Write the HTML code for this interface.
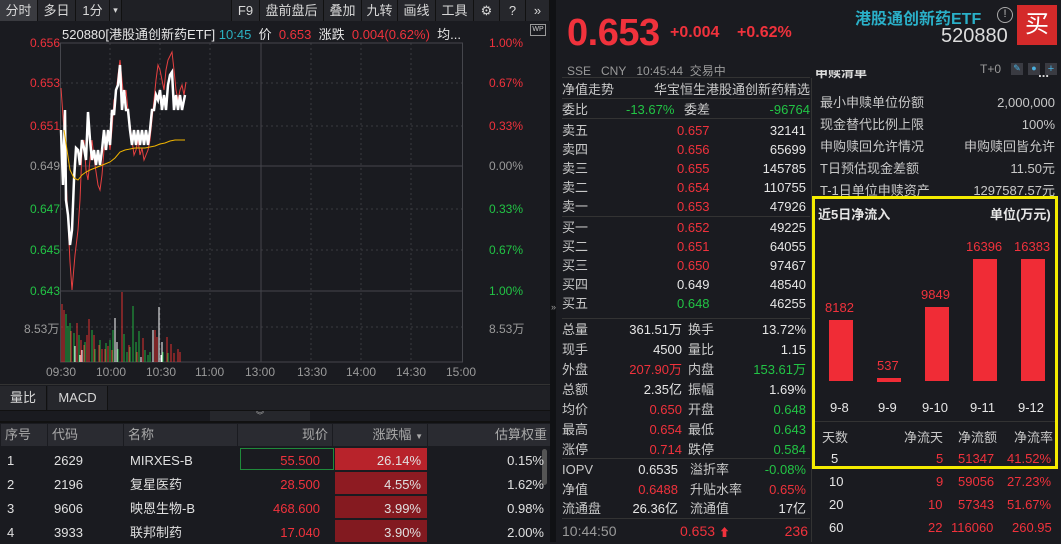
<!DOCTYPE html>
<html><head><meta charset="utf-8"><style>
*{margin:0;padding:0;box-sizing:border-box}
body{width:1061px;height:542px;background:#1a1b20;font-family:"Liberation Sans","Noto Sans CJK SC",sans-serif;color:#c8c8c8;overflow:hidden;position:relative;font-size:13px}
.a{position:absolute;white-space:nowrap}
.tb{position:absolute;top:0;height:21px;background:#26272c;border-right:1px solid #111;color:#d8d8d8;font-size:13px;line-height:21px;text-align:center}
.row{position:absolute;left:562px;width:248px;height:19px;font-size:13px;line-height:19px}
.row span{position:absolute}
.sr{position:absolute;left:815px;width:240px;height:22px;font-size:13px;line-height:22px;color:#c8c8c8}
.th{position:absolute;top:424px;height:22px;background:#2a2b31;color:#aaa;line-height:22px;font-size:13px}
.td{position:absolute;height:23px;line-height:23px;font-size:13px;color:#e0e0e0}
.r{color:#f0323c}.g{color:#22c445}.w{color:#e6e6e6}.gr{color:#9a9a9a}
</style></head><body>
<div class="tb" style="left:0;width:38px;background:#3a3b40">分时</div>
<div class="tb" style="left:38px;width:38px">多日</div>
<div class="tb" style="left:76px;width:34px">1分</div>
<div class="tb" style="left:110px;width:12px;font-size:9px">▾</div>
<div class="tb" style="left:122px;width:110px;background:#1f2025"></div>
<div class="tb" style="left:232px;width:28px">F9</div>
<div class="tb" style="left:260px;width:64px">盘前盘后</div>
<div class="tb" style="left:324px;width:38px">叠加</div>
<div class="tb" style="left:362px;width:36px">九转</div>
<div class="tb" style="left:398px;width:38px">画线</div>
<div class="tb" style="left:436px;width:38px">工具</div>
<div class="tb" style="left:474px;width:26px">⚙</div>
<div class="tb" style="left:500px;width:26px">?</div>
<div class="tb" style="left:526px;width:24px">»</div>
<div class="a" style="left:62px;top:24px;font-size:13px"><span class="w">520880[港股通创新药ETF]</span> <span style="color:#2ab0c0">10:45</span>&nbsp; <span class="w">价</span>&nbsp; <span class="r">0.653</span>&nbsp; <span class="w">涨跌</span>&nbsp; <span class="r">0.004(0.62%)</span>&nbsp; <span class="w">均...</span></div>
<div class="a" style="left:530px;top:24px;width:16px;height:12px;border:1px solid #999;font-size:7px;color:#ccc;text-align:center;line-height:10px">WP</div>
<svg class="a" style="left:0;top:0" width="550" height="380">
<g stroke="#3a3b40" stroke-dasharray="2,3" stroke-width="1">
<line x1="61" y1="83" x2="462" y2="83"/><line x1="61" y1="126" x2="462" y2="126"/><line x1="61" y1="209" x2="462" y2="209"/><line x1="61" y1="250" x2="462" y2="250"/><line x1="61" y1="327" x2="462" y2="327"/>
<line x1="110" y1="43" x2="110" y2="362"/><line x1="160" y1="43" x2="160" y2="362"/><line x1="210" y1="43" x2="210" y2="362"/><line x1="311" y1="43" x2="311" y2="362"/><line x1="361" y1="43" x2="361" y2="362"/><line x1="411" y1="43" x2="411" y2="362"/>
</g>
<g stroke="#45464c" stroke-width="1" fill="none">
<line x1="61" y1="43" x2="462" y2="43"/><line x1="61" y1="166" x2="462" y2="166"/><line x1="61" y1="291" x2="462" y2="291"/>
<line x1="261" y1="43" x2="261" y2="362"/><rect x="60.5" y="43" width="402" height="319"/>
</g>
<polyline fill="none" stroke="#e84040" stroke-width="1" points="61,88 64,130 67,200 70,262 72,290 75,255 78,230 80,200 82,150 84,140 86,170 88,180 90,160 92,140 95,165 98,185 100,190 102,175 104,150 106,140 108,130 110,150 112,130 114,100 116,95 118,75 120,60 122,80 124,100 126,90 128,110 130,125 132,140 134,155 136,150 138,140 140,155 142,148 144,160 146,155 148,150 150,140 152,120 154,100 156,80 158,65 160,70 162,80 164,90 166,70 168,60 170,56 172,52 174,70 176,90 178,100 180,90 182,85 184,95 186,82"/>
<polyline fill="none" stroke="#ffffff" stroke-width="2.5" points="61,130 63,185 65,110 66,200 68,215 70,245 72,230 74,180 76,148 78,150 80,165 82,140 84,148 86,160 88,112 90,140 92,160 94,150 96,165 98,150 100,165 102,150 104,130 106,150 108,130 110,145 112,110 114,115 116,90 118,85 120,65 122,110 124,90 126,110 128,110 130,130 132,145 134,130 136,145 138,130 140,145 142,130 144,145 146,130 148,145 150,130 152,110 154,110 156,95 158,100 160,90 162,110 164,95 166,110 168,85 170,75 172,72 174,110 176,95 178,110 180,95 182,110 184,100 185,95"/>
<polyline fill="none" stroke="#f0b400" stroke-width="1" points="64,130 67,150 70,170 74,178 78,180 82,175 86,172 90,170 95,168 100,166 105,164 110,162 115,158 120,152 125,150 135,148 145,148 150,147 155,146 160,144 165,143 170,141 175,140 185,140"/>
<g stroke-width="1">
<path stroke="#e03030" d="M62 362V304M64 362V310M71 362V331M77 362V323M81 362V340M84 362V345M87 362V335M89 362V319M94 362V335M99 362V345M102 362V349M105 362V349M108 362V346M112 362V350M122 362V292M129 362V345M133 362V350M137 362V352M143 362V338M155 362V330M157 362V337M167 362V337M171 362V344M174 362V353M178 362V349M180 362V352"/>
<path stroke="#20b040" d="M66 362V314M68 362V326M70 362V323M74 362V333M79 362V335M85 362V342M92 362V330M95 362V349M100 362V340M106 362V343M110 362V340M113 362V330M118 362V349M124 362V334M127 362V352M130 362V347M133 362V306M136 362V342M139 362V331M145 362V350M148 362V355M150 362V352M163 362V352M168 362V353"/>
<path stroke="#ffffff" d="M75 362V346M80 362V355M82 362V350M115 362V318M117 362V342M141 362V357M153 362V330M159 362V307M162 362V342M161 362V355"/>
</g>
</svg>
<div class="a r" style="left:30px;top:36px;font-size:12px">0.656</div>
<div class="a r" style="left:30px;top:76px;font-size:12px">0.653</div>
<div class="a r" style="left:30px;top:119px;font-size:12px">0.651</div>
<div class="a gr" style="left:30px;top:159px;font-size:12px">0.649</div>
<div class="a g" style="left:30px;top:202px;font-size:12px">0.647</div>
<div class="a g" style="left:30px;top:243px;font-size:12px">0.645</div>
<div class="a g" style="left:30px;top:284px;font-size:12px">0.643</div>
<div class="a gr" style="left:24px;top:320px;font-size:12px">8.53万</div>
<div class="a r" style="left:489px;top:36px;font-size:12px">1.00%</div>
<div class="a r" style="left:489px;top:76px;font-size:12px">0.67%</div>
<div class="a r" style="left:489px;top:119px;font-size:12px">0.33%</div>
<div class="a gr" style="left:489px;top:159px;font-size:12px">0.00%</div>
<div class="a g" style="left:489px;top:202px;font-size:12px">0.33%</div>
<div class="a g" style="left:489px;top:243px;font-size:12px">0.67%</div>
<div class="a g" style="left:489px;top:284px;font-size:12px">1.00%</div>
<div class="a gr" style="left:489px;top:320px;font-size:12px">8.53万</div>
<div class="a gr" style="left:46px;top:365px;font-size:12px">09:30</div>
<div class="a gr" style="left:96px;top:365px;font-size:12px">10:00</div>
<div class="a gr" style="left:146px;top:365px;font-size:12px">10:30</div>
<div class="a gr" style="left:195px;top:365px;font-size:12px">11:00</div>
<div class="a gr" style="left:245px;top:365px;font-size:12px">13:00</div>
<div class="a gr" style="left:297px;top:365px;font-size:12px">13:30</div>
<div class="a gr" style="left:346px;top:365px;font-size:12px">14:00</div>
<div class="a gr" style="left:396px;top:365px;font-size:12px">14:30</div>
<div class="a gr" style="left:446px;top:365px;font-size:12px">15:00</div>
<div class="a" style="left:0;top:384px;width:550px;height:1px;background:#333"></div>
<div class="a" style="left:0;top:386px;width:550px;height:24px;background:#1f2025"></div>
<div class="tb" style="top:386px;left:0;width:47px;height:24px;line-height:24px;background:#26272c">量比</div>
<div class="tb" style="top:386px;left:48px;width:60px;height:24px;line-height:24px;background:#26272c">MACD</div>
<div class="a" style="left:0;top:410px;width:550px;height:1px;background:#111"></div>
<div class="a" style="left:210px;top:411px;width:100px;height:10px;background:#26272c;color:#aaa;font-size:8px;text-align:center;line-height:10px">︾</div>
<div class="a" style="left:0;top:421px;width:550px;height:2px;background:#111"></div>
<div class="th" style="left:1px;width:46px;padding-left:4px">序号</div>
<div class="th" style="left:48px;width:75px;padding-left:4px">代码</div>
<div class="th" style="left:124px;width:113px;padding-left:4px">名称</div>
<div class="th" style="left:238px;width:94px;text-align:right;padding-right:4px">现价</div>
<div class="th" style="left:333px;width:94px;text-align:right;padding-right:4px">涨跌幅 <span style="font-size:8px">▼</span></div>
<div class="th" style="left:428px;width:122px;text-align:right;padding-right:3px">估算权重</div>
<div class="a" style="left:240px;top:448px;width:94px;height:22px;border:1px solid #1f8a3a"></div>
<div class="a" style="left:335px;top:448px;width:92px;height:22px;background:#b8232b"></div>
<div class="a" style="left:335px;top:472px;width:92px;height:22px;background:#8e1b22"></div>
<div class="a" style="left:335px;top:496px;width:92px;height:22px;background:#851a20"></div>
<div class="a" style="left:335px;top:520px;width:92px;height:22px;background:#821a20"></div>
<div class="a" style="left:542px;top:449px;width:5px;height:36px;background:#555;border-radius:3px"></div>
<div class="td" style="left:7px;top:449px">1</div><div class="td" style="left:54px;top:449px">2629</div><div class="td" style="left:130px;top:449px">MIRXES-B</div><div class="td r" style="left:238px;top:449px;width:82px;text-align:right">55.500</div><div class="td" style="left:335px;top:449px;width:86px;text-align:right">26.14%</div><div class="td" style="left:428px;top:449px;width:116px;text-align:right">0.15%</div>
<div class="td" style="left:7px;top:473px">2</div><div class="td" style="left:54px;top:473px">2196</div><div class="td" style="left:130px;top:473px">复星医药</div><div class="td r" style="left:238px;top:473px;width:82px;text-align:right">28.500</div><div class="td" style="left:335px;top:473px;width:86px;text-align:right">4.55%</div><div class="td" style="left:428px;top:473px;width:116px;text-align:right">1.62%</div>
<div class="td" style="left:7px;top:497px">3</div><div class="td" style="left:54px;top:497px">9606</div><div class="td" style="left:130px;top:497px">映恩生物-B</div><div class="td r" style="left:238px;top:497px;width:82px;text-align:right">468.600</div><div class="td" style="left:335px;top:497px;width:86px;text-align:right">3.99%</div><div class="td" style="left:428px;top:497px;width:116px;text-align:right">0.98%</div>
<div class="td" style="left:7px;top:521px">4</div><div class="td" style="left:54px;top:521px">3933</div><div class="td" style="left:130px;top:521px">联邦制药</div><div class="td r" style="left:238px;top:521px;width:82px;text-align:right">17.040</div><div class="td" style="left:335px;top:521px;width:86px;text-align:right">3.90%</div><div class="td" style="left:428px;top:521px;width:116px;text-align:right">2.00%</div>
<div class="a" style="left:550px;top:0;width:6px;height:542px;background:#101114"></div>
<div class="a gr" style="left:551px;top:302px;font-size:9px">»</div>
<div class="a r" style="left:567px;top:12px;font-size:38px;font-weight:bold;letter-spacing:-0.5px">0.653</div>
<div class="a r" style="left:670px;top:24px;font-size:16px;font-weight:bold">+0.004</div>
<div class="a r" style="left:737px;top:24px;font-size:16px;font-weight:bold">+0.62%</div>
<div class="a" style="left:855px;top:5px;font-size:16px;font-weight:bold;color:#2ab0c8">港股通创新药ETF</div>
<div class="a" style="left:997px;top:7px;width:16px;height:16px;border:1.5px solid #aaa;border-radius:50%;font-size:11px;text-align:center;line-height:13px;color:#bbb">!</div>
<div class="a" style="left:941px;top:25px;font-size:20px;color:#ddd">520880</div>
<div class="a" style="left:1017px;top:5px;width:40px;height:40px;background:#d42a2a;color:#fff;font-size:24px;text-align:center;line-height:40px">买</div>
<div class="a gr" style="left:567px;top:62px;font-size:12px">SSE&nbsp;&nbsp; CNY&nbsp;&nbsp; 10:45:44&nbsp; 交易中</div>
<div class="a gr" style="left:980px;top:62px;font-size:12px">T+0</div>
<div class="a" style="left:1011px;top:63px;width:12px;height:12px;background:#3a3b42;color:#4ab0e0;font-size:9px;text-align:center">✎</div>
<div class="a" style="left:1028px;top:63px;width:12px;height:12px;background:#3a3b42;color:#4ab0e0;font-size:9px;text-align:center">●</div>
<div class="a" style="left:1045px;top:63px;width:12px;height:12px;background:#3a3b42;color:#4ab0e0;font-size:11px;line-height:12px;text-align:center">+</div>
<div class="a" style="left:562px;top:77px;width:248px;height:1px;background:#333"></div>
<div class="a" style="left:811px;top:78px;width:1px;height:464px;background:#333"></div>
<div class="row" style="top:80px"><span>净值走势</span><span style="right:0">华宝恒生港股通创新药精选</span></div>
<div class="a" style="left:562px;top:98px;width:248px;height:1px;background:#333"></div>
<div class="row" style="top:100px"><span>委比</span><span class="g" style="left:64px">-13.67%</span><span style="left:122px">委差</span><span class="g" style="right:0">-96764</span></div>
<div class="a" style="left:562px;top:118px;width:248px;height:1px;background:#333"></div>
<div class="row" style="top:121px"><span>卖五</span><span class="r" style="left:115px">0.657</span><span class="w" style="right:4px">32141</span></div>
<div class="row" style="top:140px"><span>卖四</span><span class="r" style="left:115px">0.656</span><span class="w" style="right:4px">65699</span></div>
<div class="row" style="top:159px"><span>卖三</span><span class="r" style="left:115px">0.655</span><span class="w" style="right:4px">145785</span></div>
<div class="row" style="top:178px"><span>卖二</span><span class="r" style="left:115px">0.654</span><span class="w" style="right:4px">110755</span></div>
<div class="row" style="top:197px"><span>卖一</span><span class="r" style="left:115px">0.653</span><span class="w" style="right:4px">47926</span></div>
<div class="a" style="left:562px;top:216px;width:248px;height:1px;background:#333"></div>
<div class="row" style="top:218px"><span>买一</span><span class="r" style="left:115px">0.652</span><span class="w" style="right:4px">49225</span></div>
<div class="row" style="top:237px"><span>买二</span><span class="r" style="left:115px">0.651</span><span class="w" style="right:4px">64055</span></div>
<div class="row" style="top:256px"><span>买三</span><span class="r" style="left:115px">0.650</span><span class="w" style="right:4px">97467</span></div>
<div class="row" style="top:275px"><span>买四</span><span class="w" style="left:115px">0.649</span><span class="w" style="right:4px">48540</span></div>
<div class="row" style="top:294px"><span>买五</span><span class="g" style="left:115px">0.648</span><span class="w" style="right:4px">46255</span></div>
<div class="a" style="left:562px;top:318px;width:248px;height:1px;background:#333"></div>
<div class="row" style="top:320px"><span>总量</span><span class="w" style="right:128px">361.51万</span><span style="left:126px">换手</span><span class="w" style="right:4px">13.72%</span></div>
<div class="row" style="top:340px"><span>现手</span><span class="w" style="right:128px">4500</span><span style="left:126px">量比</span><span class="w" style="right:4px">1.15</span></div>
<div class="row" style="top:360px"><span>外盘</span><span class="r" style="right:128px">207.90万</span><span style="left:126px">内盘</span><span class="g" style="right:4px">153.61万</span></div>
<div class="row" style="top:380px"><span>总额</span><span class="w" style="right:128px">2.35亿</span><span style="left:126px">振幅</span><span class="w" style="right:4px">1.69%</span></div>
<div class="row" style="top:400px"><span>均价</span><span class="r" style="right:128px">0.650</span><span style="left:126px">开盘</span><span class="g" style="right:4px">0.648</span></div>
<div class="row" style="top:420px"><span>最高</span><span class="r" style="right:128px">0.654</span><span style="left:126px">最低</span><span class="g" style="right:4px">0.643</span></div>
<div class="row" style="top:440px"><span>涨停</span><span class="r" style="right:128px">0.714</span><span style="left:126px">跌停</span><span class="g" style="right:4px">0.584</span></div>
<div class="a" style="left:562px;top:458px;width:248px;height:1px;background:#333"></div>
<div class="row" style="top:460px"><span>IOPV</span><span class="w" style="right:132px">0.6535</span><span style="left:128px">溢折率</span><span class="g" style="right:4px">-0.08%</span></div>
<div class="row" style="top:480px"><span>净值</span><span class="r" style="right:132px">0.6488</span><span style="left:128px">升贴水率</span><span class="r" style="right:4px">0.65%</span></div>
<div class="row" style="top:499px"><span>流通盘</span><span class="w" style="right:132px">26.36亿</span><span style="left:128px">流通值</span><span class="w" style="right:4px">17亿</span></div>
<div class="a" style="left:562px;top:518px;width:248px;height:1px;background:#333"></div>
<div class="row" style="top:522px;font-size:14px"><span class="gr">10:44:50</span><span class="r" style="left:118px">0.653 <span style="position:static;font-size:11px">⬆</span></span><span class="r" style="right:2px">236</span></div>
<div class="sr" style="top:70px;height:14px;overflow:hidden;line-height:22px;font-weight:bold;color:#ddd"><span style="position:relative;top:-8px">申赎清单</span><span style="position:absolute;right:6px;top:-8px">...</span></div>
<div class="sr" style="top:92px"><span style="padding-left:5px">最小申赎单位份额</span><span style="position:absolute;right:0">2,000,000</span></div>
<div class="sr" style="top:114px"><span style="padding-left:5px">现金替代比例上限</span><span style="position:absolute;right:0">100%</span></div>
<div class="sr" style="top:136px"><span style="padding-left:5px">申购赎回允许情况</span><span style="position:absolute;right:0">申购赎回皆允许</span></div>
<div class="sr" style="top:158px"><span style="padding-left:5px">T日预估现金差额</span><span style="position:absolute;right:0">11.50元</span></div>
<div class="sr" style="top:180px;height:16px;overflow:hidden"><span style="padding-left:5px">T-1日单位申赎资产</span><span style="position:absolute;right:0">1297587.57元</span></div>
<div class="a" style="left:812px;top:196px;width:246px;height:273px;border:3px solid #f5ec00"></div>
<div class="a w" style="left:818px;top:204px;font-size:13px;font-weight:bold">近5日净流入</div>
<div class="a w" style="left:990px;top:204px;font-size:13px;font-weight:bold">单位(万元)</div>
<div class="a" style="left:829px;top:320px;width:24px;height:61px;background:#f02c36"></div>
<div class="a" style="left:877px;top:378px;width:24px;height:4px;background:#f02c36"></div>
<div class="a" style="left:925px;top:307px;width:24px;height:74px;background:#f02c36"></div>
<div class="a" style="left:973px;top:259px;width:24px;height:122px;background:#f02c36"></div>
<div class="a" style="left:1021px;top:259px;width:24px;height:122px;background:#f02c36"></div>
<div class="a r" style="left:825px;top:300px;font-size:13px">8182</div>
<div class="a r" style="left:877px;top:358px;font-size:13px">537</div>
<div class="a r" style="left:921px;top:287px;font-size:13px">9849</div>
<div class="a r" style="left:966px;top:239px;font-size:13px">16396</div>
<div class="a r" style="left:1014px;top:239px;font-size:13px">16383</div>
<div class="a w" style="left:830px;top:400px">9-8</div>
<div class="a w" style="left:878px;top:400px">9-9</div>
<div class="a w" style="left:922px;top:400px">9-10</div>
<div class="a w" style="left:970px;top:400px">9-11</div>
<div class="a w" style="left:1018px;top:400px">9-12</div>
<div class="a" style="left:815px;top:421px;width:240px;height:1px;background:#333"></div>
<div class="a" style="left:822px;top:427px">天数</div>
<div class="a" style="left:904px;top:427px">净流天</div>
<div class="a" style="left:958px;top:427px">净流额</div>
<div class="a" style="left:1014px;top:427px">净流率</div>
<div class="a w" style="left:831px;top:451px">5</div><div class="a r" style="left:936px;top:451px">5</div><div class="a r" style="left:958px;top:451px">51347</div><div class="a r" style="left:1007px;top:451px">41.52%</div>
<div class="a w" style="left:829px;top:474px">10</div><div class="a r" style="left:936px;top:474px">9</div><div class="a r" style="left:958px;top:474px">59056</div><div class="a r" style="left:1007px;top:474px">27.23%</div>
<div class="a w" style="left:829px;top:497px">20</div><div class="a r" style="left:928px;top:497px">10</div><div class="a r" style="left:958px;top:497px">57343</div><div class="a r" style="left:1007px;top:497px">51.67%</div>
<div class="a w" style="left:829px;top:520px">60</div><div class="a r" style="left:928px;top:520px">22</div><div class="a r" style="left:951px;top:520px">116060</div><div class="a r" style="left:1012px;top:520px">260.95</div>
</body></html>
